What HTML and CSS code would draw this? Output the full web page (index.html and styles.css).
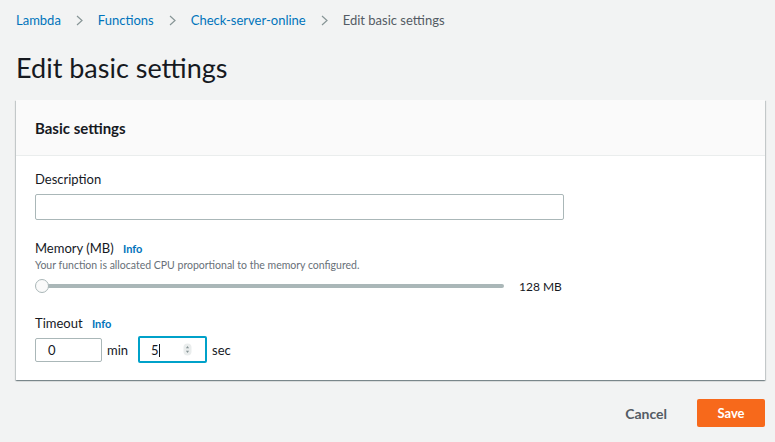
FILE: index.html
```html
<!DOCTYPE html>
<html lang="en">
<head>
    <meta charset="UTF-8">
    <meta name="viewport" content="width=device-width, initial-scale=1.0">
    <title>Edit basic settings</title>
    <link rel="stylesheet" href="styles.css">
</head>
<body>
    <div class="page">
        <nav class="breadcrumbs">
            <a href="#">Lambda</a>
            <span class="sep"><svg width="7" height="11" viewBox="0 0 7 11"><path d="M1 1l5 4.5L1 10" fill="none" stroke="#879596" stroke-width="1.2"/></svg></span>
            <a href="#">Functions</a>
            <span class="sep"><svg width="7" height="11" viewBox="0 0 7 11"><path d="M1 1l5 4.5L1 10" fill="none" stroke="#879596" stroke-width="1.2"/></svg></span>
            <a href="#">Check-server-online</a>
            <span class="sep"><svg width="7" height="11" viewBox="0 0 7 11"><path d="M1 1l5 4.5L1 10" fill="none" stroke="#879596" stroke-width="1.2"/></svg></span>
            <span class="current">Edit basic settings</span>
        </nav>

        <h1>Edit basic settings</h1>

        <div class="card">
            <div class="card-header">Basic settings</div>
            <div class="card-body">
                <div class="field">
                    <label class="label">Description</label>
                    <input class="text-input wide" type="text">
                </div>

                <div class="field">
                    <div class="label">Memory (MB) <a href="#" class="info">Info</a></div>
                    <div class="hint">Your function is allocated CPU proportional to the memory configured.</div>
                    <div class="slider-row">
                        <div class="slider">
                            <div class="track"></div>
                            <div class="thumb"></div>
                        </div>
                        <span class="slider-value">128 MB</span>
                    </div>
                </div>

                <div class="field last">
                    <div class="label">Timeout <a href="#" class="info">Info</a></div>
                    <div class="timeout-row">
                        <div class="num-input">0</div>
                        <span class="unit">min</span>
                        <div class="num-input focused">
                            <span>5<span class="caret"></span></span>
                            <svg class="spinner" width="9" height="13" viewBox="0 0 9 13">
                                <rect x="0.5" y="0.5" width="8" height="12" rx="4" fill="#eaeded"/>
                                <path d="M4.5 3l1.6 2.2H2.9z M4.5 10l1.6-2.2H2.9z" fill="#879596"/>
                            </svg>
                        </div>
                        <span class="unit">sec</span>
                    </div>
                </div>
            </div>
        </div>

        <div class="actions">
            <a href="#" class="cancel">Cancel</a>
            <button class="save">Save</button>
        </div>
    </div>
</body>
</html>
```

FILE: styles.css
```css
body {
    margin: 0;
    background-color: #f2f3f3;
    font-family: Lato, "Liberation Sans", Arial, sans-serif;
    color: #16191f;
}
.page {
    padding: 0 10px 0 16px;
}
.breadcrumbs {
    height: 40px;
    display: flex;
    align-items: center;
    font-size: 13px;
}
.breadcrumbs a {
    color: #0073bb;
    text-decoration: none;
}
.breadcrumbs .sep {
    display: flex;
    margin: 0 15px;
}
.breadcrumbs .current {
    color: #545b64;
}
h1 {
    margin: 12px 0 0;
    font-size: 27px;
    font-weight: 400;
    line-height: 32px;
    height: 48px;
}
.card {
    background: white;
    box-shadow: 0 1px 1px 0 rgba(0,28,36,0.3), 1px 1px 1px 0 rgba(0,28,36,0.15), -1px 1px 1px 0 rgba(0,28,36,0.15);
}
.card-header {
    height: 55px;
    display: flex;
    align-items: center;
    padding: 0 19px;
    background: #fafafa;
    border-bottom: 1px solid #eaeded;
    font-size: 15px;
    font-weight: 700;
}
.card-body {
    padding: 14px 19px 17px;
}
.field {
    margin-bottom: 21px;
}
.field:first-child {
    margin-bottom: 19px;
}
.field.last {
    margin-bottom: 0;
}
.label {
    display: block;
    font-size: 13px;
    line-height: 18px;
}
.info {
    margin-left: 6px;
    font-size: 11px;
    font-weight: 700;
    color: #0073bb;
    text-decoration: none;
}
.hint {
    font-size: 10.5px;
    line-height: 14px;
    color: #687078;
}
.text-input {
    display: block;
    box-sizing: border-box;
    height: 26px;
    margin-top: 6px;
    border: 1px solid #aab7b8;
    border-radius: 2px;
    background: white;
}
.text-input.wide {
    width: 529px;
}
.slider-row {
    display: flex;
    align-items: center;
    height: 14px;
    margin-top: 7px;
}
.slider {
    position: relative;
    width: 469px;
    height: 14px;
}
.track {
    position: absolute;
    left: 2px;
    right: 0;
    top: 5px;
    height: 4px;
    border-radius: 2px;
    background: #aab7b8;
}
.thumb {
    position: absolute;
    left: 0;
    top: 0;
    box-sizing: border-box;
    width: 14px;
    height: 14px;
    border-radius: 50%;
    background: #fafafa;
    border: 1px solid #aab7b8;
}
.slider-value {
    margin-left: 15px;
    font-size: 12px;
}
.timeout-row {
    display: flex;
    align-items: center;
    margin-top: 3px;
}
.num-input {
    box-sizing: border-box;
    width: 67px;
    height: 24px;
    display: flex;
    align-items: center;
    justify-content: space-between;
    padding: 0 10px 0 12px;
    border: 1px solid #aab7b8;
    border-radius: 2px;
    background: white;
    font-size: 13px;
}
.num-input.focused {
    width: 69px;
    height: 27px;
    border: 2px solid #00a1c9;
    padding: 0 13px 0 11px;
}
.caret {
    display: inline-block;
    width: 1px;
    height: 13px;
    background: #16191f;
    vertical-align: -2px;
}
.unit {
    margin: 0 10px 0 5px;
    font-size: 13px;
}
.actions {
    display: flex;
    justify-content: flex-end;
    align-items: center;
    padding-top: 19px;
}
.cancel {
    margin-right: 30px;
    font-size: 14px;
    font-weight: 700;
    color: #545b64;
    text-decoration: none;
}
.save {
    width: 68px;
    height: 28px;
    border: none;
    border-radius: 2px;
    background: #f7691b;
    color: white;
    font-family: inherit;
    font-size: 13px;
    font-weight: 700;
}
```
